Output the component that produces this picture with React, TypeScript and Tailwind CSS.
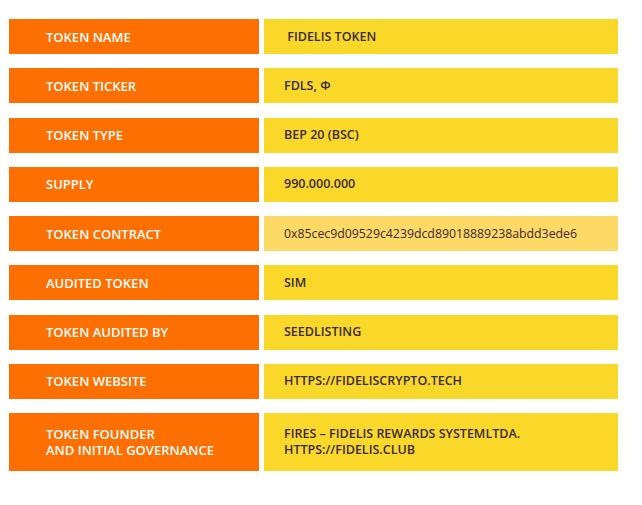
import React from "react";

const rows: { label: string[]; value: string[]; light?: boolean }[] = [
  { label: ["TOKEN NAME"], value: ["\u00a0FIDELIS TOKEN"] },
  { label: ["TOKEN TICKER"], value: ["FDLS, \u03a6"] },
  { label: ["TOKEN TYPE"], value: ["BEP 20 (BSC)"] },
  { label: ["SUPPLY"], value: ["990.000.000"] },
  { label: ["TOKEN CONTRACT"], value: ["0x85cec9d09529c4239dcd89018889238abdd3ede6"], light: true },
  { label: ["AUDITED TOKEN"], value: ["SIM"] },
  { label: ["TOKEN AUDITED BY"], value: ["SEEDLISTING"] },
  { label: ["TOKEN WEBSITE"], value: ["HTTPS://FIDELISCRYPTO.TECH"] },
  {
    label: ["TOKEN FOUNDER", "AND INITIAL GOVERNANCE"],
    value: ["FIRES \u2013 FIDELIS REWARDS SYSTEMLTDA.", "HTTPS://FIDELIS.CLUB"],
  },
];

export default function App() {
  return (
    <div
      className="w-[642px] h-[505px] bg-white pt-[19px] pl-[9px]"
      style={{ fontFamily: '"Open Sans", "Liberation Sans", sans-serif' }}
    >
      <div className="flex flex-col gap-[14.25px]">
        {rows.map((r, i) => {
          const tall = r.label.length > 1;
          return (
            <div key={i} className={`flex gap-[5px] ${tall ? "h-[58px]" : "h-[35px]"}`}>
              <div className="w-[250px] bg-[#fd6f00] flex flex-col justify-center pl-[37px] text-white text-[13px] font-semibold leading-[16px]">
                {r.label.map((l, j) => (
                  <div key={j}>{l}</div>
                ))}
              </div>
              <div
                className={`w-[354px] flex flex-col justify-center pl-[20px] text-[#3b2a3c] leading-[16px] ${
                  r.light ? "bg-[#fdd965] text-[12.3px] font-normal" : "bg-[#f9d82a] text-[12.5px] font-semibold"
                }`}
              >
                {r.value.map((v, j) => (
                  <div key={j}>{v}</div>
                ))}
              </div>
            </div>
          );
        })}
      </div>
    </div>
  );
}
